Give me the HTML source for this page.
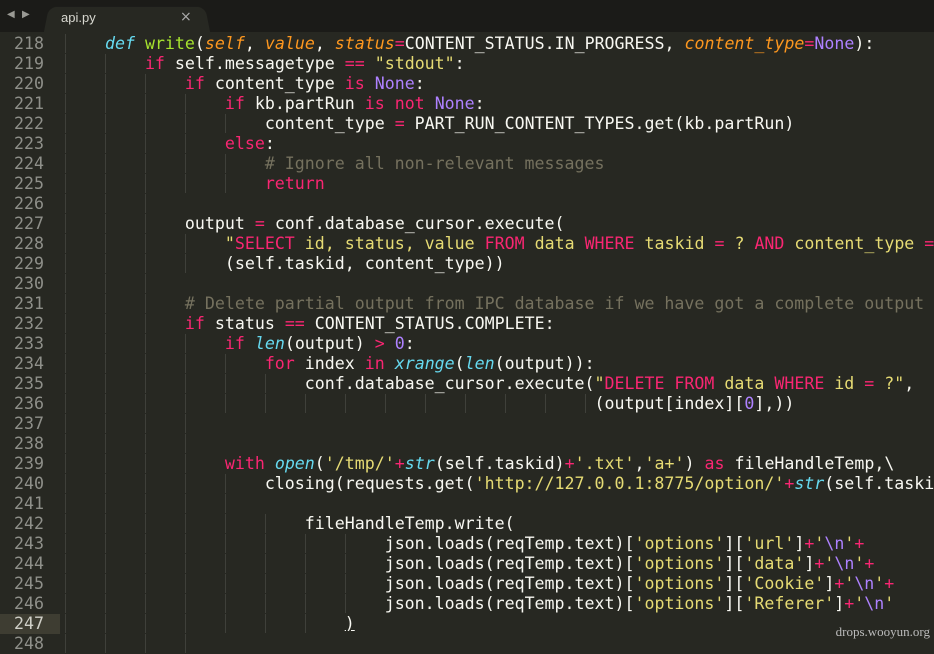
<!DOCTYPE html>
<html><head><meta charset="utf-8"><style>
html,body{margin:0;padding:0;background:#272822;width:934px;height:644px;overflow:hidden}
.top{position:absolute;left:0;top:0;width:934px;height:32px;background:#1b1b18}
.tab{position:absolute;left:44px;top:5px;width:166px;height:27px;background:#272822;border-radius:9px 9px 0 0;transform:perspective(60px) rotateX(8deg);transform-origin:bottom}
.tabt{position:absolute;left:61px;top:10px;font:13px "Liberation Sans",sans-serif;color:#d8d8d0}
.x{position:absolute;left:180px;top:9px;font:14px "DejaVu Sans",sans-serif;color:#aaa}
.arr{position:absolute;top:9px;font:10px "DejaVu Sans",sans-serif;color:#9a9a94}
.code{position:absolute;left:0;top:34px;width:934px}
.l{position:relative;height:20px;white-space:pre;font:16.6px/20px "DejaVu Sans Mono",monospace;color:#f8f8f2}
.n{position:absolute;left:0;width:44px;text-align:right;color:#8f908a}
.t{position:absolute;left:65px;top:0}
.g{background:repeating-linear-gradient(to right,#3f403a 0 1px,transparent 1px 40px)}
.k{color:#f92672}.f{color:#a6e22e}.s{color:#e6db74}.c{color:#75715e}.p{color:#ae81ff}
.d{color:#66d9ef;font-style:italic}.a{color:#fd971f;font-style:italic}
.cur{background:#3e3d32;position:absolute;left:0;width:60px;height:20px}
.wm{position:absolute;right:4px;bottom:4px;font:13px "Liberation Serif",serif;color:#bbb}
</style></head><body>
<div class="top"></div>
<div class="tab"></div>
<span class="arr" style="left:7px">◀</span><span class="arr" style="left:22px">▶</span>
<div class="tabt">api.py</div><div class="x">×</div>
<div class="code">
<div class="l"><span class="n">218</span><span class="t"><span class="g">    </span><span class="d">def</span> <span class="f">write</span>(<span class="a">self</span>, <span class="a">value</span>, <span class="a">status</span><span class="k">=</span>CONTENT_STATUS.IN_PROGRESS, <span class="a">content_type</span><span class="k">=</span><span class="p">None</span>):</span></div>
<div class="l"><span class="n">219</span><span class="t"><span class="g">        </span><span class="k">if</span> self.messagetype <span class="k">==</span> <span class="s">"stdout"</span>:</span></div>
<div class="l"><span class="n">220</span><span class="t"><span class="g">            </span><span class="k">if</span> content_type <span class="k">is</span> <span class="p">None</span>:</span></div>
<div class="l"><span class="n">221</span><span class="t"><span class="g">                </span><span class="k">if</span> kb.partRun <span class="k">is not</span> <span class="p">None</span>:</span></div>
<div class="l"><span class="n">222</span><span class="t"><span class="g">                    </span>content_type <span class="k">=</span> PART_RUN_CONTENT_TYPES.get(kb.partRun)</span></div>
<div class="l"><span class="n">223</span><span class="t"><span class="g">                </span><span class="k">else</span>:</span></div>
<div class="l"><span class="n">224</span><span class="t"><span class="g">                    </span><span class="c"># Ignore all non-relevant messages</span></span></div>
<div class="l"><span class="n">225</span><span class="t"><span class="g">                    </span><span class="k">return</span></span></div>
<div class="l"><span class="n">226</span><span class="t"><span class="g">            </span></span></div>
<div class="l"><span class="n">227</span><span class="t"><span class="g">            </span>output <span class="k">=</span> conf.database_cursor.execute(</span></div>
<div class="l"><span class="n">228</span><span class="t"><span class="g">                </span><span class="s">"</span><span class="k">SELECT</span><span class="s"> id, status, value </span><span class="k">FROM</span><span class="s"> data </span><span class="k">WHERE</span><span class="s"> taskid </span><span class="k">=</span><span class="s"> ? </span><span class="k">AND</span><span class="s"> content_type </span><span class="k">=</span></span></div>
<div class="l"><span class="n">229</span><span class="t"><span class="g">                </span>(self.taskid, content_type))</span></div>
<div class="l"><span class="n">230</span><span class="t"><span class="g">            </span></span></div>
<div class="l"><span class="n">231</span><span class="t"><span class="g">            </span><span class="c"># Delete partial output from IPC database if we have got a complete output</span></span></div>
<div class="l"><span class="n">232</span><span class="t"><span class="g">            </span><span class="k">if</span> status <span class="k">==</span> CONTENT_STATUS.COMPLETE:</span></div>
<div class="l"><span class="n">233</span><span class="t"><span class="g">                </span><span class="k">if</span> <span class="d">len</span>(output) <span class="k">&gt;</span> <span class="p">0</span>:</span></div>
<div class="l"><span class="n">234</span><span class="t"><span class="g">                    </span><span class="k">for</span> index <span class="k">in</span> <span class="d">xrange</span>(<span class="d">len</span>(output)):</span></div>
<div class="l"><span class="n">235</span><span class="t"><span class="g">                        </span>conf.database_cursor.execute(<span class="s">"</span><span class="k">DELETE FROM</span><span class="s"> data </span><span class="k">WHERE</span><span class="s"> id </span><span class="k">=</span><span class="s"> ?"</span>,</span></div>
<div class="l"><span class="n">236</span><span class="t"><span class="g">                                                     </span>(output[index][<span class="p">0</span>],))</span></div>
<div class="l"><span class="n">237</span><span class="t"><span class="g">                </span></span></div>
<div class="l"><span class="n">238</span><span class="t"><span class="g">                </span></span></div>
<div class="l"><span class="n">239</span><span class="t"><span class="g">                </span><span class="k">with</span> <span class="d">open</span>(<span class="s">'/tmp/'</span><span class="k">+</span><span class="d">str</span>(self.taskid)<span class="k">+</span><span class="s">'.txt'</span>,<span class="s">'a+'</span>) <span class="k">as</span> fileHandleTemp,\</span></div>
<div class="l"><span class="n">240</span><span class="t"><span class="g">                    </span>closing(requests.get(<span class="s">'http://127.0.0.1:8775/option/'</span><span class="k">+</span><span class="d">str</span>(self.taskid</span></div>
<div class="l"><span class="n">241</span><span class="t"><span class="g">                    </span></span></div>
<div class="l"><span class="n">242</span><span class="t"><span class="g">                        </span>fileHandleTemp.write(</span></div>
<div class="l"><span class="n">243</span><span class="t"><span class="g">                                </span>json.loads(reqTemp.text)[<span class="s">'options'</span>][<span class="s">'url'</span>]<span class="k">+</span><span class="s">'</span><span class="p">\n</span><span class="s">'</span><span class="k">+</span></span></div>
<div class="l"><span class="n">244</span><span class="t"><span class="g">                                </span>json.loads(reqTemp.text)[<span class="s">'options'</span>][<span class="s">'data'</span>]<span class="k">+</span><span class="s">'</span><span class="p">\n</span><span class="s">'</span><span class="k">+</span></span></div>
<div class="l"><span class="n">245</span><span class="t"><span class="g">                                </span>json.loads(reqTemp.text)[<span class="s">'options'</span>][<span class="s">'Cookie'</span>]<span class="k">+</span><span class="s">'</span><span class="p">\n</span><span class="s">'</span><span class="k">+</span></span></div>
<div class="l"><span class="n">246</span><span class="t"><span class="g">                                </span>json.loads(reqTemp.text)[<span class="s">'options'</span>][<span class="s">'Referer'</span>]<span class="k">+</span><span class="s">'</span><span class="p">\n</span><span class="s">'</span></span></div>
<div class="l"><span class="cur"></span><span class="n" style="color:#d0d0c8">247</span><span class="t"><span class="g">                            </span><u>)</u></span></div>
<div class="l"><span class="n">248</span><span class="t"><span class="g">                </span></span></div>
</div>
<div class="wm">drops.wooyun.org</div>
</body></html>
